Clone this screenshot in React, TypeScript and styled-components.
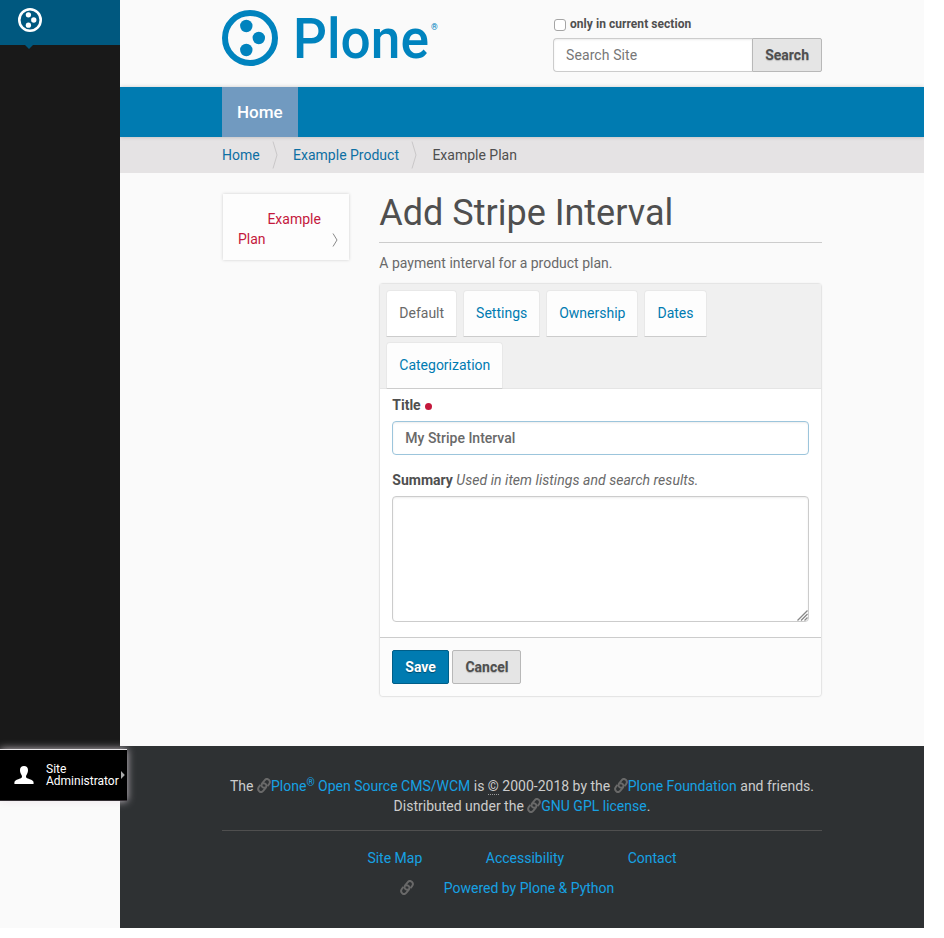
import React from "react";
import styled, { createGlobalStyle, css } from "styled-components";

const GlobalStyle = createGlobalStyle`
  *, *::before, *::after { box-sizing: border-box; }
  body {
    margin: 0;
    background: #fff;
    color: #4f4f4f;
    font: 400 14px/20px Roboto, "Liberation Sans", sans-serif;
    overflow: hidden;
  }
  a { text-decoration: none; }
`;

const Page = styled.div`
  display: flex;
  width: 924px;
  height: 928px;
  background: #fafafa;
`;

/* Toolbar */
const Toolbar = styled.aside`
  position: relative;
  z-index: 2;
  flex: none;
  display: flex;
  flex-direction: column;
  width: 120px;
  height: 801px;
  background: #191919;
`;
const ToolbarHead = styled.a`
  position: relative;
  height: 45px;
  padding: 8px 0 0 18px;
  background: #00587f;
  svg { display: block; }
  &::after {
    content: "";
    position: absolute;
    left: 25px;
    top: 45px;
    border: 4px solid transparent;
    border-top-color: #00587f;
    border-bottom: 0;
  }
`;
const UserMenu = styled.a`
  display: flex;
  align-items: center;
  width: 127px;
  height: 52px;
  margin-top: auto;
  padding-left: 14px;
  background: #000;
  border-top: 1px solid #e8e6e8;
  border-bottom: 1px solid #332e33;
  box-shadow: 0 0 8px rgba(235, 225, 232, 0.85);
  color: #fff;
  font-size: 12px;
  line-height: 12px;
`;
const UserName = styled.span`
  width: 73px;
  margin-left: 12px;
`;
const Caret = styled.svg`
  flex: none;
  margin: 0 0 1px 2px;
`;

/* Main column */
const Main = styled.div`
  display: flex;
  flex-direction: column;
  flex: 1;
`;
const Container = styled.div`
  width: 600px;
  margin-left: 102px;
`;
const Header = styled.header`
  height: 87px;
`;
const HeaderRow = styled(Container)`
  display: flex;
  justify-content: space-between;
`;
const Logo = styled.svg`
  display: block;
`;
const SearchForm = styled.form`
  width: 269px;
  padding-top: 15px;
`;
const SectionLabel = styled.label`
  display: flex;
  align-items: center;
  height: 18px;
  margin-bottom: 5px;
  font-size: 12px;
  font-weight: 700;
  letter-spacing: 0.05px;
`;
const Checkbox = styled.input`
  appearance: none;
  width: 12px;
  height: 12px;
  margin: 2px 4px 0 1px;
  border: 1px solid #a5a5a5;
  border-radius: 3px;
  background: #fff;
`;
const SearchRow = styled.div`
  display: flex;
`;
const controlText = css`
  font: 500 14px/20px Roboto, "Liberation Sans", sans-serif;
`;
const Field = styled.input<{ $focused?: boolean; $joined?: boolean }>`
  ${controlText}
  display: block;
  width: 100%;
  min-width: 0;
  height: 34px;
  padding: 0 12px;
  color: #696969;
  background: #fff;
  border: 1px solid ${(p) => (p.$focused ? "#9cc5dc" : "#ccc")};
  border-radius: ${(p) => (p.$joined ? "4px 0 0 4px" : "4px")};
  border-right-width: ${(p) => (p.$joined ? 0 : 1)}px;
  box-shadow: inset 0 1px 2px rgba(0, 0, 0, 0.075);
  ${(p) => p.$joined && "font-weight: 400; letter-spacing: 0.1px;"}
  &::placeholder { color: #777; opacity: 1; }
`;
const Button = styled.button<{ $primary?: boolean; $joined?: boolean }>`
  ${controlText}
  flex: none;
  height: 34px;
  padding: 0 12px;
  font-weight: 700;
  color: ${(p) => (p.$primary ? "#fff" : "#4f4f4f")};
  background: ${(p) => (p.$primary ? "#007bb1" : "#e5e5e5")};
  border: 1px solid ${(p) => (p.$primary ? "#005e88" : "#b8b8b8")};
  border-radius: ${(p) => (p.$joined ? "0 2px 2px 0" : "2px")};
  text-shadow: 0 1px 1px ${(p) => (p.$primary ? "rgba(0,0,0,.4)" : "rgba(0,0,0,.2)")};
`;

const NavBar = styled.nav`
  position: relative;
  height: 50px;
  background: #007bb1;
  box-shadow: 0 0 4px rgba(0, 0, 0, 0.2);
  clip-path: inset(-5px 0);
`;
const NavItem = styled.a`
  display: block;
  width: 76px;
  padding: 15px;
  color: #fff;
  background: #719ac0;
  font-size: 17px;
  font-weight: 500;
  white-space: nowrap;
`;
const CrumbBar = styled.div`
  height: 36px;
  background: #e5e3e4;
`;
const Crumbs = styled(Container)`
  display: flex;
  padding-top: 3px;
  line-height: 30px;
`;
const Crumb = styled.a<{ $current?: boolean }>`
  color: ${(p) => (p.$current ? "#4f4f4f" : "#0d6fa3")};
`;
const Separator = styled.svg`
  margin: 1px 14px 0 12.4px;
`;

const Columns = styled(Container)`
  display: flex;
  align-items: flex-start;
  padding-top: 21px;
  height: 573px;
`;
const Portlet = styled.a`
  width: 126px;
  height: 66px;
  margin-left: 1px;
  padding: 15px 15px 11px;
  display: flex;
  align-items: flex-end;
  background: #fdfdfd;
  box-shadow: 0 0 3px rgba(0, 0, 0, 0.18);
  color: #c4183c;
  svg { flex: none; margin: 0 -5px 1px 8px; }
`;
const PortletText = styled.span`
  flex: 1;
  text-indent: 29.4px;
`;
const Content = styled.main`
  width: 442.7px;
  margin-left: 30.3px;
`;
const Heading = styled.h1`
  height: 49px;
  margin: 0 0 10px;
  border-bottom: 1px solid #ccc;
  font-size: 36px;
  font-weight: 400;
  line-height: 38px;
`;
const Description = styled.p`
  margin: 0 0 10px;
  color: #696969;
`;
const FormPanel = styled.section`
  height: 414px;
  background: #fff;
  border: 1px solid #e5e5e5;
  border-radius: 4px;
  box-shadow: 0 0 2px rgba(0, 0, 0, 0.06);
`;
const Tabs = styled.nav`
  display: flex;
  flex-wrap: wrap;
  align-content: flex-start;
  gap: 5px 6px;
  height: 105px;
  padding: 6px 6px 0;
  background: #f0f0f0;
  border-bottom: 1px solid #e5e5e5;
`;
const Tab = styled.a<{ $active?: boolean }>`
  height: 47px;
  padding: 12px 12px;
  color: ${(p) => (p.$active ? "#696969" : "#007bb1")};
  background: ${(p) => (p.$active ? "#fff" : "#fdfdfd")};
  border: 1px solid #e8e8e8;
  border-bottom-color: #ccc;
  border-radius: 4px 4px 0 0;
`;
const Fields = styled.div`
  height: 249px;
  padding: 6px 12px 0;
  border-bottom: 1px solid #ccc;
`;
const FieldLabel = styled.label<{ $spaced?: boolean }>`
  display: block;
  height: 20px;
  margin: ${(p) => (p.$spaced ? "15px 0 6px" : "0 0 6px")};
  font-weight: 700;
`;
const Required = styled.span`
  display: inline-block;
  width: 7px;
  height: 7px;
  margin-left: 4.5px;
  border-radius: 50%;
  background: #c4183c;
  vertical-align: 0;
`;
const Help = styled.span`
  color: #696969;
  font-weight: 400;
  font-style: italic;
  letter-spacing: 0.05px;
`;
const SummaryBox = styled.textarea`
  display: block;
  width: 100%;
  height: 126px;
  border: 1px solid #ccc;
  border-radius: 4px;
  box-shadow: inset 0 1px 2px rgba(0, 0, 0, 0.075);
  resize: none;
`;
const TextAreaWrap = styled.div`
  position: relative;
  svg { position: absolute; right: 1px; bottom: 1px; }
`;
const Controls = styled.div`
  display: flex;
  gap: 3.5px;
  height: 58px;
  padding: 12px;
  background: #fcfcfc;
  border-radius: 0 0 4px 4px;
`;

/* Footer */
const Footer = styled.footer`
  flex: 1;
  padding-top: 30px;
  background: #2e3133;
  color: #ccc;
  text-align: center;
  a { color: #16a1e3; }
`;
const Colophon = styled.p`
  margin: 0;
  padding-bottom: 14px;
  border-bottom: 1px solid #4f4f4f;
  sup { font-size: 10.500px; line-height: 0; vertical-align: 5px; }
  abbr { text-decoration: none; border-bottom: 1px dotted #999; }
`;
const FooterLinks = styled.div`
  display: flex;
  justify-content: center;
  gap: 63.5px;
  margin-top: 17px;
`;
const PoweredBy = styled.div`
  display: flex;
  justify-content: center;
  gap: 30px;
  padding-right: 30px;
  margin-top: 10px;
  svg { margin-top: 2px; }
`;
const LinkGlyph = styled.svg`
  display: inline-block;
  width: 14px;
  height: 15px;
  vertical-align: -2px;
`;

const PloneDots = ({ size, color }: { size: number; color: string }) => (
  <svg width={size} height={size} viewBox="0 0 56 56">
    <circle cx="28" cy="28" r="25" fill="none" stroke={color} strokeWidth="6" />
    <circle cx="24.3" cy="16" r="6.2" fill={color} />
    <circle cx="36.8" cy="28" r="6.2" fill={color} />
    <circle cx="24.3" cy="40" r="6.2" fill={color} />
  </svg>
);

const ExternalIcon = () => (
  <LinkGlyph viewBox="0 0 14 14" preserveAspectRatio="none" fill="none" stroke="#696969" strokeWidth="1.900">
    <path d="M8.300 8.800C6.700 9.500 4.900 8.600 4.600 7.100C4.400 6.200 4.700 5.600 5.300 4.900L7.600 2.200C8.800.8 10.500.6 11.800 1.700S13.200 4.400 12.100 5.700L10.500 7.600" />
    <path d="M5.700 5.200C7.300 4.500 9.100 5.400 9.400 6.900C9.600 7.800 9.300 8.400 8.700 9.100L6.400 11.800C5.200 13.200 3.500 13.400 2.200 12.300S.8 9.600 1.900 8.300L3.500 6.400" />
  </LinkGlyph>
);

const CrumbArrow = () => (
  <Separator width="7" height="28" viewBox="0 0 7 28">
    <path d="M1 .5 5 14 1 27.500" fill="none" stroke="#c9c7c8" />
  </Separator>
);

export default function App() {
  return (
    <>
      <GlobalStyle />
      <Page>
        <Toolbar>
          <ToolbarHead>
            <PloneDots size={24} color="#fff" />
          </ToolbarHead>
          <UserMenu>
            <svg width="20" height="18" viewBox="0 0 20 18">
              <path
                d="M10 0c2.500 0 4 1.500 4 4 0 1.800-.4 3-1.100 4.200-.6 1-.9 1.600-.9 2.300 0 1 .6 1.500 2 2.100 2.500 1 4.400 1.700 5.200 2.600.4.600.4 1.400.4 2.800H.4c0-1.400 0-2.200.4-2.800.8-.9 2.700-1.600 5.200-2.600 1.400-.6 2-1.100 2-2.100 0-.7-.3-1.300-.9-2.300C6.400 7 6 5.800 6 4c0-2.500 1.500-4 4-4Z"
                fill="#fff"
              />
            </svg>
            <UserName>Site Administrator</UserName>
            <Caret width="4" height="8" viewBox="0 0 4 8">
              <path d="M0 0 3.800 4 0 8Z" fill="#aaa" />
            </Caret>
          </UserMenu>
        </Toolbar>
        <Main>
          <Header>
            <HeaderRow>
              <Logo width="217" height="80" viewBox="0 0 217 80">
                <g transform="translate(0 10)">
                  <PloneDots size={56} color="#0083be" />
                </g>
                <text x="71" y="58" fontSize="56" fontWeight="500" fill="#0083be" textLength="136" lengthAdjust="spacingAndGlyphs" fontFamily="Roboto">
                  Plone
                </text>
                <text x="209" y="30" fontSize="8.500" fontWeight="700" fill="#0083be" fontFamily="Roboto">
                  ®
                </text>
              </Logo>
              <SearchForm>
                <SectionLabel>
                  <Checkbox type="checkbox" />
                  only in current section
                </SectionLabel>
                <SearchRow>
                  <Field $joined placeholder="Search Site" />
                  <Button $joined type="button">Search</Button>
                </SearchRow>
              </SearchForm>
            </HeaderRow>
          </Header>
          <NavBar>
            <Container>
              <NavItem>Home</NavItem>
            </Container>
          </NavBar>
          <CrumbBar>
            <Crumbs>
              <Crumb>Home</Crumb>
              <CrumbArrow />
              <Crumb>Example Product</Crumb>
              <CrumbArrow />
              <Crumb $current>Example Plan</Crumb>
            </Crumbs>
          </CrumbBar>
          <Columns>
            <Portlet>
              <PortletText>Example Plan</PortletText>
              <svg width="7" height="16" viewBox="0 0 7 16">
                <path d="M1 1.500 5 8 1 14.500" fill="none" stroke="#8a8a8a" />
              </svg>
            </Portlet>
            <Content>
              <Heading>Add Stripe Interval</Heading>
              <Description>A payment interval for a product plan.</Description>
              <FormPanel>
                <Tabs>
                  <Tab $active>Default</Tab>
                  <Tab>Settings</Tab>
                  <Tab>Ownership</Tab>
                  <Tab>Dates</Tab>
                  <Tab>Categorization</Tab>
                </Tabs>
                <Fields>
                  <FieldLabel>
                    Title
                    <Required />
                  </FieldLabel>
                  <Field $focused defaultValue="My Stripe Interval" />
                  <FieldLabel $spaced>
                    Summary <Help>Used in item listings and search results.</Help>
                  </FieldLabel>
                  <TextAreaWrap>
                    <SummaryBox />
                    <svg width="11" height="11" viewBox="0 0 11 11">
                      <path d="M.5 10.500l10-10M4 10.500 10.500 4M7.500 10.500l3-3" stroke="#888" strokeWidth="1.300" fill="none" />
                    </svg>
                  </TextAreaWrap>
                </Fields>
                <Controls>
                  <Button $primary>Save</Button>
                  <Button>Cancel</Button>
                </Controls>
              </FormPanel>
            </Content>
          </Columns>
          <Footer>
            <Container>
              <Colophon>
                The <ExternalIcon /><a>Plone<sup>®</sup> Open Source CMS/WCM</a> is <abbr>©</abbr> 2000-2018 by the{" "}
                <ExternalIcon /><a>Plone Foundation</a> and friends.
                <br />
                Distributed under the <ExternalIcon /><a>GNU GPL license</a>.
              </Colophon>
              <FooterLinks>
                <a>Site Map</a>
                <a>Accessibility</a>
                <a>Contact</a>
              </FooterLinks>
              <PoweredBy>
                <ExternalIcon />
                <a>Powered by Plone &amp; Python</a>
              </PoweredBy>
            </Container>
          </Footer>
        </Main>
      </Page>
    </>
  );
}
